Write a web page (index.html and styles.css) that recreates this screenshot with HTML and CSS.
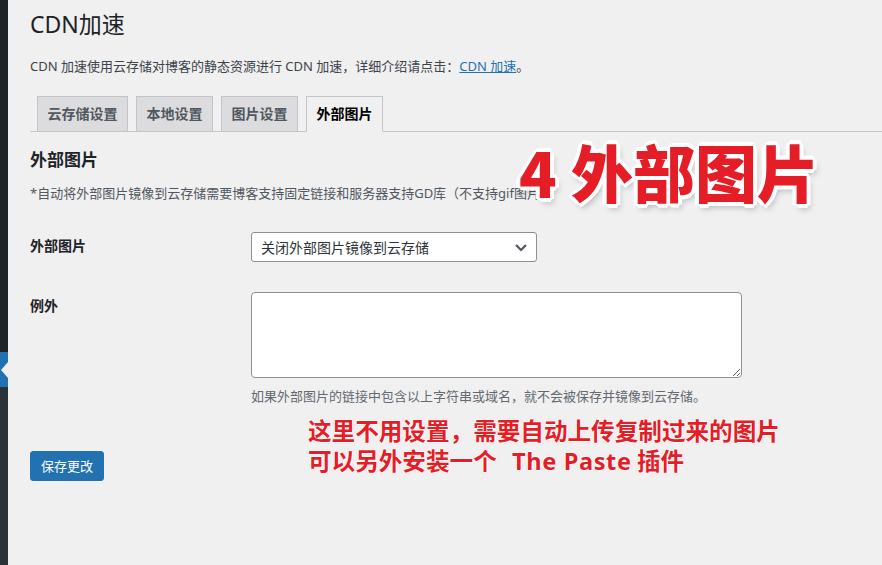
FILE: index.html
```html
<!DOCTYPE html>
<html lang="zh-CN">
<head>
<meta charset="utf-8">
<title>CDN加速</title>
<link rel="stylesheet" href="styles.css">
</head>
<body>
<div class="page">
  <aside class="adminmenu">
    <div class="menu-top"></div>
    <div class="menu-current"><span class="menu-arrow"></span></div>
    <div class="menu-rest"></div>
  </aside>
  <main class="wrap">
    <h1 class="title">CDN加速</h1>
    <p class="intro">CDN 加速使用云存储对博客的静态资源进行 CDN 加速，详细介绍请点击：<a class="link" href="#">CDN 加速</a>。</p>
    <nav class="tabs">
      <span class="tab">云存储设置</span>
      <span class="tab">本地设置</span>
      <span class="tab">图片设置</span>
      <span class="tab tab-active">外部图片</span>
    </nav>
    <h2 class="section">外部图片</h2>
    <p class="note">*自动将外部图片镜像到云存储需要博客支持固定链接和服务器支持GD库（不支持gif图片）</p>
    <div class="form">
      <div class="row row-select">
        <div class="label">外部图片</div>
        <div class="field">
          <div class="select">
            <span>关闭外部图片镜像到云存储</span>
            <svg class="chev" width="14" height="9" viewBox="0 0 14 9"><path d="M2 2 L7 7 L12 2" fill="none" stroke="#50575e" stroke-width="2.2"/></svg>
          </div>
        </div>
      </div>
      <div class="row row-text">
        <div class="label">例外</div>
        <div class="field">
          <textarea class="area"></textarea>
          <p class="hint">如果外部图片的链接中包含以上字符串或域名，就不会被保存并镜像到云存储。</p>
        </div>
      </div>
    </div>
    <button class="btn">保存更改</button>
  </main>
  <div class="anno-big">4 外部图片</div>
  <div class="anno-small"><div class="anno-line">这里不用设置，需要自动上传复制过来的图片</div><div class="anno-line">可以另外安装一个 <span class="latin">The Paste</span> 插件</div></div>
</div>
</body>
</html>
```
FILE: styles.css
```css
html, body {
  margin: 0;
  padding: 0;
  background: #f0f0f1;
}
body {
  font-family: "Noto Sans", "Noto Sans CJK SC", sans-serif;
  color: #3c434a;
  font-size: 13px;
}
.page {
  position: relative;
  display: flex;
  width: 882px;
  height: 565px;
  overflow: hidden;
}
.adminmenu {
  width: 8px;
  flex: none;
  display: flex;
  flex-direction: column;
}
.menu-top {
  height: 352px;
  background: #1d2327;
}
.menu-current {
  height: 35px;
  background: #2271b1;
  display: flex;
  align-items: center;
  justify-content: flex-end;
}
.menu-arrow {
  width: 0;
  height: 0;
  border-top: 8px solid transparent;
  border-bottom: 8px solid transparent;
  border-right: 7px solid #f0f0f1;
}
.menu-rest {
  flex: 1;
  background: #2c3338;
}
.wrap {
  flex: 1;
  padding-left: 22px;
}
.title {
  margin: 0;
  padding-top: 9px;
  font-size: 23px;
  line-height: 30px;
  font-weight: 400;
  color: #1d2327;
}
.intro {
  margin: 17px 0 0;
  line-height: 20px;
}
.link {
  color: #2271b1;
  text-decoration: underline;
}
.tabs {
  margin-top: 20px;
  display: flex;
  gap: 8px;
  padding-left: 7px;
  height: 35px;
  border-bottom: 1px solid #c3c4c7;
}
.tab {
  height: 24px;
  padding: 5px 9.5px;
  border: 1px solid #c3c4c7;
  background: #dcdcde;
  color: #50575e;
  font-size: 14px;
  line-height: 24px;
  font-weight: 700;
}
.tab-active {
  background: #f0f0f1;
  border-bottom-color: #f0f0f1;
  color: #000;
}
.section {
  margin: 16px 0 0;
  font-size: 17px;
  line-height: 24px;
  font-weight: 700;
  color: #1d2327;
}
.note {
  margin: 11px 0 0;
  line-height: 20px;
  color: #50575e;
}
.form {
  margin-top: 29px;
  display: flex;
  flex-direction: column;
  gap: 30px;
}
.row {
  display: flex;
}
.label {
  width: 221px;
  flex: none;
  padding-top: 4px;
  font-size: 14px;
  line-height: 20px;
  font-weight: 700;
  color: #1d2327;
}
.field {
  display: flex;
  flex-direction: column;
}
.select {
  box-sizing: border-box;
  width: 286px;
  height: 30px;
  border: 1px solid #8c8f94;
  border-radius: 3px;
  background: #fff;
  display: flex;
  align-items: center;
  justify-content: space-between;
  padding: 0 8px 0 9px;
  font-size: 14px;
  color: #2c3338;
}
.chev {
  display: block;
}
.area {
  box-sizing: border-box;
  display: block;
  width: 491px;
  height: 86px;
  margin: 0;
  border: 1px solid #8c8f94;
  border-radius: 4px;
  background: #fff;
  font: inherit;
}
.hint {
  margin: 8px 0 0;
  line-height: 20px;
  color: #646970;
}
.btn {
  display: block;
  margin-top: 45px;
  box-sizing: border-box;
  height: 30px;
  padding: 0 10px;
  border: 1px solid #2271b1;
  border-radius: 3px;
  background: #2271b1;
  color: #fff;
  font-family: inherit;
  font-size: 13px;
  line-height: 28px;
}
.anno-big {
  position: absolute;
  left: 519px;
  top: 136px;
  font-family: "Noto Sans CJK SC", sans-serif;
  font-size: 62px;
  line-height: 70px;
  font-weight: 900;
  color: #e51d27;
  white-space: nowrap;
  text-shadow:
    3px 0 0 #fff, -3px 0 0 #fff, 0 3px 0 #fff, 0 -3px 0 #fff,
    2px 2px 0 #fff, -2px 2px 0 #fff, 2px -2px 0 #fff, -2px -2px 0 #fff,
    4px 1px 0 #fff, -4px 1px 0 #fff, 1px 4px 0 #fff, 1px -4px 0 #fff,
    3px 5px 6px rgba(0,0,0,0.25);
}
.anno-small {
  position: absolute;
  left: 308px;
  top: 416px;
  display: flex;
  flex-direction: column;
  gap: 2px;
  font-family: "Noto Sans CJK SC", sans-serif;
  font-size: 23.6px;
  line-height: 28px;
  font-weight: 700;
  color: #e51d27;
  white-space: nowrap;
  text-shadow:
    1px 0 1px #fff, -1px 0 1px #fff, 0 1px 1px #fff, 0 -1px 1px #fff,
    0 0 3px rgba(255,200,200,0.8);
}
.latin {
  font-family: "Noto Sans", sans-serif;
  letter-spacing: 0.6px;
  margin-left: 10px;
}
```
